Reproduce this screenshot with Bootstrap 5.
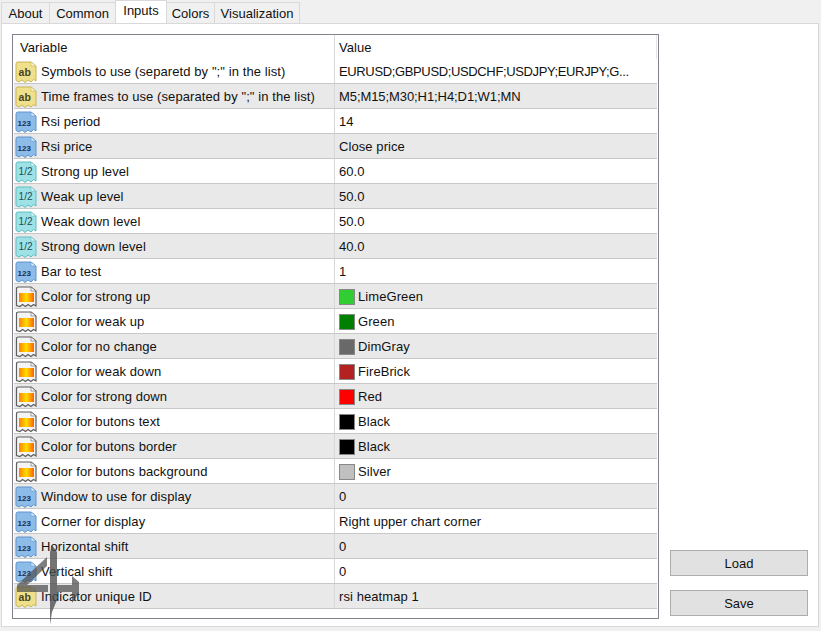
<!DOCTYPE html>
<html lang="en">
<head>
<meta charset="utf-8">
<title>Inputs</title>
<link href="https://cdn.jsdelivr.net/npm/bootstrap@5.3.0/dist/css/bootstrap.min.css" rel="stylesheet">
<style>
html,body{height:631px;overflow:hidden}
body{background:#f0f0f0;font-family:"Liberation Sans",Arial,sans-serif;font-size:13px;color:#111;position:relative;line-height:1.2}
.mt-tabs{height:23px;padding-left:1px;align-items:flex-end}
.mt-tab{height:21px;border:1px solid #d9d9d9;border-bottom:0;border-left:0;padding:2px 6px 0;background:#f0f0f0;display:flex;align-items:center;justify-content:center;flex:none}
.mt-tab:first-child{border-left:1px solid #d9d9d9;width:49px;padding:2px 0 0}
.mt-tab.on{height:23px;background:#fff;padding:0 0 3px;width:52px;margin-left:-1px;border-left:1px solid #d9d9d9;position:relative}
.mt-tab-a{width:66px;padding:2px 0 0}
.mt-tab-c{width:48px;padding:2px 0 0}
.mt-tab-v{width:85px;padding:2px 0 0}
.mt-panel{width:818px;height:604px;margin-left:1px;background:#fff;border:1px solid #d9d9d9;padding:10px 10px 8px;gap:11px}
.mt-grid{width:647px;height:585px;border:1px solid #82828a;overflow:hidden;flex:none}
.mt-head{height:24px;background:#fff;border-right:1px solid #e4e4e4;margin-right:1px}
.mt-row{height:25px;border-bottom:1px solid #c8c8c8;margin-left:1px;margin-right:1px}
.mt-head .mt-k{padding-left:7px;width:322px}
.mt-row.alt{background:#e9e9e9}
.mt-k{width:321px;flex:none;display:flex;align-items:center;gap:4px;padding-left:1px;padding-top:1px;border-right:1px solid #d8d8d8;height:100%;letter-spacing:.09px}
.mt-v{flex:1;display:flex;align-items:center;padding-left:4px;padding-top:1px;height:100%;min-width:0;letter-spacing:.08px}
.mt-v.caps{letter-spacing:-.36px}
.mt-v.caps2{letter-spacing:-.08px}
.mt-ico{width:22px;height:22px;flex:none;display:block}
.mt-swatch{width:16px;height:16px;border:1px solid #888;margin-right:3px;flex:none}
.mt-side{flex:1;gap:14px;padding-bottom:2px;align-items:center}
.mt-btn{width:138px;height:26px;background:#e1e1e1;border:1px solid #adadad;border-radius:0;font-size:13px;padding:0;color:#111;line-height:1;font-family:inherit}
.mt-mark{position:absolute;left:0;top:0;pointer-events:none}
</style>
</head>
<body>
<svg width="0" height="0" class="d-block position-absolute">
<defs>
<g id="i-ab"><path d="M1 3Q1 1 3 1H16L21 5V20L18.500 18.500 16 21 13 19 10 21.500 7 19 4 21 1 19.500Z" fill="#f0e08c" stroke="#c8b45a"/><path d="M16 1V5H21Z" fill="#fff8d8" stroke="#c8b45a" stroke-width=".6"/><text x="3.500" y="14.500" font-family="Liberation Sans" font-weight="700" font-size="10.500" fill="#4a4520">ab</text></g>
<g id="i-num"><path d="M1 3Q1 1 3 1H16L21 5V20L18.500 18.500 16 21 13 19 10 21.500 7 19 4 21 1 19.500Z" fill="#8ebce8" stroke="#5f94cc"/><path d="M16 1V5H21Z" fill="#dcecfa" stroke="#5f94cc" stroke-width=".6"/><text x="2.500" y="14.500" font-family="Liberation Sans" font-weight="700" font-size="8" fill="#14305a">123</text></g>
<g id="i-frac"><path d="M1 3Q1 1 3 1H16L21 5V20L18.500 18.500 16 21 13 19 10 21.500 7 19 4 21 1 19.500Z" fill="#9fe2e6" stroke="#62bcc4"/><path d="M16 1V5H21Z" fill="#e2f8fa" stroke="#62bcc4" stroke-width=".6"/><text x="3.500" y="14" font-family="Liberation Sans" font-size="10" fill="#15505a">1/2</text></g>
<linearGradient id="g-col" x1="0" x2="1"><stop offset="0" stop-color="#ff8000"/><stop offset=".5" stop-color="#ffdc00"/><stop offset="1" stop-color="#ff6000"/></linearGradient>
<g id="i-col"><path d="M1.500 3Q1.500 1 3.500 1H16L21 5V20L18.500 18.500 16 20.500 13 18.500 10.500 20.500 7.500 18.500 5 20.500 1.500 19.500Z" fill="#f4f4f4" stroke="#5e5e5e" stroke-width="1.200"/><path d="M16 1V5H21Z" fill="#fff" stroke="#5e5e5e" stroke-width=".6"/><rect x="4" y="7" width="15" height="9" fill="url(#g-col)"/></g>
</defs>
</svg>

<div class="d-flex mt-tabs">
  <div class="mt-tab">About</div>
  <div class="mt-tab mt-tab-a">Common</div>
  <div class="mt-tab on">Inputs</div>
  <div class="mt-tab mt-tab-c">Colors</div>
  <div class="mt-tab mt-tab-v">Visualization</div>
</div>

<div class="d-flex mt-panel">
  <div class="mt-grid">
    <div class="d-flex mt-head"><div class="mt-k">Variable</div><div class="mt-v">Value</div></div>
    <div class="d-flex mt-row"><div class="mt-k"><svg class="mt-ico"><use href="#i-ab"/></svg>Symbols to use (separetd by ";" in the list)</div><div class="mt-v caps">EURUSD;GBPUSD;USDCHF;USDJPY;EURJPY;G...</div></div>
    <div class="d-flex mt-row alt"><div class="mt-k"><svg class="mt-ico"><use href="#i-ab"/></svg>Time frames to use (separated by ";" in the list)</div><div class="mt-v caps2">M5;M15;M30;H1;H4;D1;W1;MN</div></div>
    <div class="d-flex mt-row"><div class="mt-k"><svg class="mt-ico"><use href="#i-num"/></svg>Rsi period</div><div class="mt-v">14</div></div>
    <div class="d-flex mt-row alt"><div class="mt-k"><svg class="mt-ico"><use href="#i-num"/></svg>Rsi price</div><div class="mt-v">Close price</div></div>
    <div class="d-flex mt-row"><div class="mt-k"><svg class="mt-ico"><use href="#i-frac"/></svg>Strong up level</div><div class="mt-v">60.0</div></div>
    <div class="d-flex mt-row alt"><div class="mt-k"><svg class="mt-ico"><use href="#i-frac"/></svg>Weak up level</div><div class="mt-v">50.0</div></div>
    <div class="d-flex mt-row"><div class="mt-k"><svg class="mt-ico"><use href="#i-frac"/></svg>Weak down level</div><div class="mt-v">50.0</div></div>
    <div class="d-flex mt-row alt"><div class="mt-k"><svg class="mt-ico"><use href="#i-frac"/></svg>Strong down level</div><div class="mt-v">40.0</div></div>
    <div class="d-flex mt-row"><div class="mt-k"><svg class="mt-ico"><use href="#i-num"/></svg>Bar to test</div><div class="mt-v">1</div></div>
    <div class="d-flex mt-row alt"><div class="mt-k"><svg class="mt-ico"><use href="#i-col"/></svg>Color for strong up</div><div class="mt-v"><span class="mt-swatch" style="background:#32cd32"></span>LimeGreen</div></div>
    <div class="d-flex mt-row"><div class="mt-k"><svg class="mt-ico"><use href="#i-col"/></svg>Color for weak up</div><div class="mt-v"><span class="mt-swatch" style="background:#008000"></span>Green</div></div>
    <div class="d-flex mt-row alt"><div class="mt-k"><svg class="mt-ico"><use href="#i-col"/></svg>Color for no change</div><div class="mt-v"><span class="mt-swatch" style="background:#696969"></span>DimGray</div></div>
    <div class="d-flex mt-row"><div class="mt-k"><svg class="mt-ico"><use href="#i-col"/></svg>Color for weak down</div><div class="mt-v"><span class="mt-swatch" style="background:#b22222"></span>FireBrick</div></div>
    <div class="d-flex mt-row alt"><div class="mt-k"><svg class="mt-ico"><use href="#i-col"/></svg>Color for strong down</div><div class="mt-v"><span class="mt-swatch" style="background:#ff0000"></span>Red</div></div>
    <div class="d-flex mt-row"><div class="mt-k"><svg class="mt-ico"><use href="#i-col"/></svg>Color for butons text</div><div class="mt-v"><span class="mt-swatch" style="background:#000000"></span>Black</div></div>
    <div class="d-flex mt-row alt"><div class="mt-k"><svg class="mt-ico"><use href="#i-col"/></svg>Color for butons border</div><div class="mt-v"><span class="mt-swatch" style="background:#000000"></span>Black</div></div>
    <div class="d-flex mt-row"><div class="mt-k"><svg class="mt-ico"><use href="#i-col"/></svg>Color for butons background</div><div class="mt-v"><span class="mt-swatch" style="background:#c0c0c0"></span>Silver</div></div>
    <div class="d-flex mt-row alt"><div class="mt-k"><svg class="mt-ico"><use href="#i-num"/></svg>Window to use for display</div><div class="mt-v">0</div></div>
    <div class="d-flex mt-row"><div class="mt-k"><svg class="mt-ico"><use href="#i-num"/></svg>Corner for display</div><div class="mt-v">Right upper chart corner</div></div>
    <div class="d-flex mt-row alt"><div class="mt-k"><svg class="mt-ico"><use href="#i-num"/></svg>Horizontal shift</div><div class="mt-v">0</div></div>
    <div class="d-flex mt-row"><div class="mt-k"><svg class="mt-ico"><use href="#i-num"/></svg>Vertical shift</div><div class="mt-v">0</div></div>
    <div class="d-flex mt-row alt"><div class="mt-k"><svg class="mt-ico"><use href="#i-ab"/></svg>Indicator unique ID</div><div class="mt-v">rsi heatmap 1</div></div>
  </div>
  <div class="d-flex flex-column justify-content-end mt-side">
    <button type="button" class="btn mt-btn">Load</button>
    <button type="button" class="btn mt-btn">Save</button>
  </div>
</div>

<svg class="mt-mark" width="100" height="631" viewBox="0 0 100 631" aria-hidden="true">
  <path d="M47 557 17 585V592H48V585H27L47 566Z" fill="#4d4d4d" fill-opacity=".72"/>
  <path d="M50 552 52 545 57 552V600L52 612 50 625Z" fill="#4d4d4d" fill-opacity=".78"/>
  <path d="M57 585H72V592H57Z" fill="#4d4d4d" fill-opacity=".72"/>
  <path d="M72 576 79 582V593L72 603Z" fill="#4d4d4d" fill-opacity=".72"/>
</svg>
</body>
</html>
